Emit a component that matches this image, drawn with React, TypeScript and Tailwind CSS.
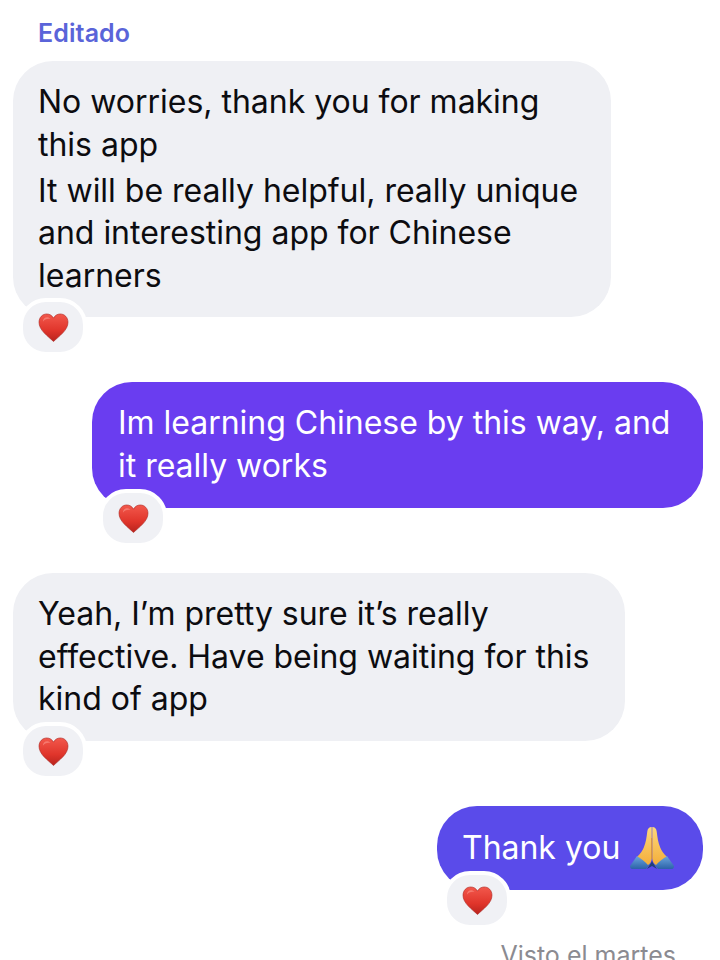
import React from 'react';

const Heart = () => (
  <svg viewBox="0 0 32 30" className="w-[31px] h-[29px]">
    <defs>
      <linearGradient id="heartFill" x1="0" y1="0" x2="0" y2="1">
        <stop offset="0" stopColor="#f2584c" />
        <stop offset="0.6" stopColor="#e0352b" />
        <stop offset="1" stopColor="#b8231d" />
      </linearGradient>
    </defs>
    <path
      d="M16 29.5C10 23.8 1 17.8 1 9.6 1 4.6 4.6 1 9 1c3 0 5.500 1.500 7 4.300C17.500 2.500 20 1 23 1c4.400 0 8 3.600 8 8.600 0 8.200-9 14.200-15 19.900z"
      fill="url(#heartFill)"
      stroke="#a82420"
      strokeWidth="0.6"
    />
    <path d="M5 9c0-2.500 1.800-4.500 4.300-4.500 1.500 0 2.700.6 3.600 1.700C9.500 5.600 6.500 6.800 5 9z" fill="#f98b80" opacity="0.7" />
  </svg>
);

const Pray = () => (
  <svg viewBox="0 0 44 44" className="w-[44px] h-[44px] shrink-0">
    <defs>
      <linearGradient id="sleeve" x1="0" y1="0" x2="0" y2="1">
        <stop offset="0" stopColor="#6ba6df" />
        <stop offset="1" stopColor="#2c62a8" />
      </linearGradient>
      <linearGradient id="palm" x1="0" y1="0" x2="0" y2="1">
        <stop offset="0" stopColor="#fdd77c" />
        <stop offset="1" stopColor="#f3ae3a" />
      </linearGradient>
    </defs>
    <path d="M7 30L0 40c0 2 1 3 2 3h14l4-5z" fill="url(#sleeve)" />
    <path d="M37 30l7 10c0 2-1 3-2 3H28l-4-5z" fill="url(#sleeve)" />
    <path d="M17 43l4-6 1-2 1 2 4 6-5-3z" fill="#1f3f78" />
    <path d="M21.700 1c-2.700 0-4 1.500-4.400 4.500-.7 6-1.500 11-3.500 16-1.200 3-3.200 6-6.300 9 3.500 2 7.500 5 10.500 8.500 2.500-1.500 3.500-4 3.700-6.500z" fill="url(#palm)" />
    <path d="M22.300 1c2.700 0 4 1.500 4.400 4.500.7 6 1.500 11 3.500 16 1.200 3 3.200 6 6.300 9-3.500 2-7.500 5-10.500 8.500-2.500-1.500-3.500-4-3.700-6.500z" fill="url(#palm)" />
    <path d="M21.700 12v21" stroke="#d98f2b" strokeWidth="0.8" fill="none" />
  </svg>
);

const Reaction = ({ left }: { left: string }) => (
  <div
    className={`absolute ${left} top-[calc(100%-19px)] w-[68px] h-[58px] rounded-[27px] bg-[#f0f1f5] border-4 border-white flex items-center justify-center`}
  >
    <Heart />
  </div>
);

const Bubble = ({ mine, className, children, reactionLeft }: { mine?: boolean; className: string; children: React.ReactNode; reactionLeft: string }) => (
  <div
    className={`relative rounded-[40px] pr-[20px] ${mine ? 'self-end text-white' : 'self-start text-[#0c0c10]'} ${className}`}
  >
    {children}
    <Reaction left={reactionLeft} />
  </div>
);

export default function App() {
  return (
    <div className="w-[720px] h-[960px] overflow-hidden bg-white font-['Inter',sans-serif] text-[32px] leading-[42.5px] tracking-[-0.02px]">
      <div className="pl-[38px] pt-[18px] h-[61px] text-[25px] leading-[30px] font-semibold tracking-[0.1px] text-[#5a64d9]">Editado</div>
      <div className="flex flex-col gap-[65px] pl-[13px] pr-[17px]">
        <Bubble className="w-[598px] bg-[#eff0f4] pl-[25px] pt-[20px] pb-[20px]" reactionLeft="left-[6px]">
          <p>No worries, thank you for making this app</p>
          <p className="mt-[3.500px]">It will be really helpful, really unique and interesting app for Chinese learners</p>
        </Bubble>
        <Bubble mine className="w-[611px] bg-[#6a3df0] pl-[26px] pt-[20px] pb-[21px]" reactionLeft="left-[7px]">
          Im learning Chinese by this way, and it really works
        </Bubble>
        <Bubble className="w-[612px] bg-[#eff0f4] pl-[25px] pt-[20px] pb-[20.5px]" reactionLeft="left-[6px]">
          Yeah, I’m pretty sure it’s really effective. Have being waiting for this kind of app
        </Bubble>
        <Bubble mine className="w-[266px] h-[84px] bg-[#5a4bea] pl-[25px] flex items-center gap-[10px]" reactionLeft="left-[6px]">
          <span>Thank you</span>
          <Pray />
        </Bubble>
      </div>
      <div className="mt-[50px] pr-[44px] text-right text-[25px] leading-[30px] tracking-normal text-[#8b8b91]">Visto el martes</div>
    </div>
  );
}
